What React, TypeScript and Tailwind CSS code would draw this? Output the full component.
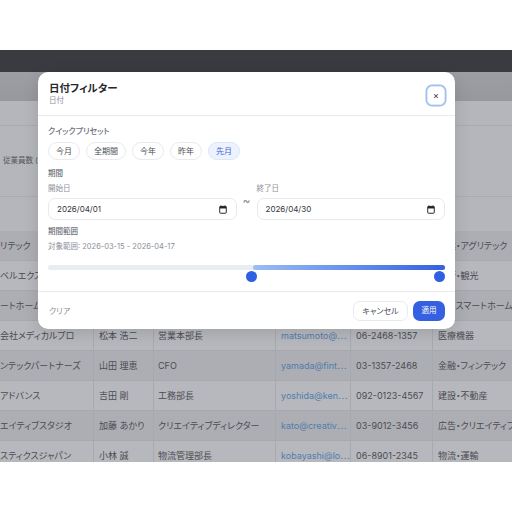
const font = '[font-family:Inter,"Noto_Sans_CJK_JP",sans-serif] [font-feature-settings:"palt"]';

const rows = [
  { company: 'リテック', name: '', title: '', mail: '', tel: '', ind: '農業・アグリテック', tone: 'bg-[#adaeb3]' },
  { company: 'ベルエクス', name: '', title: '', mail: '', tel: '', ind: '旅行・観光', tone: 'bg-[#b7b8bd]' },
  { company: 'ートホーム', name: '', title: '', mail: '', tel: '', ind: 'IoT・スマートホーム', tone: 'bg-[#adaeb3]' },
  { company: '会社メディカルプロ', name: '松本 浩二', title: '営業本部長', mail: 'matsumoto@⋯', tel: '06-2468-1357', ind: '医療機器', tone: 'bg-[#b7b8bd]' },
  { company: 'ンテックパートナーズ', name: '山田 理恵', title: 'CFO', mail: 'yamada@fint⋯', tel: '03-1357-2468', ind: '金融・フィンテック', tone: 'bg-[#adaeb3]' },
  { company: 'アドバンス', name: '吉田 剛', title: '工務部長', mail: 'yoshida@ken⋯', tel: '092-0123-4567', ind: '建設・不動産', tone: 'bg-[#b7b8bd]' },
  { company: 'エイティブスタジオ', name: '加藤 あかり', title: 'クリエイティブディレクター', mail: 'kato@creativ⋯', tel: '03-9012-3456', ind: '広告・クリエイティブ', tone: 'bg-[#adaeb3]' },
  { company: 'スティクスジャパン', name: '小林 誠', title: '物流管理部長', mail: 'kobayashi@lo⋯', tel: '06-8901-2345', ind: '物流・運輸', tone: 'bg-[#b7b8bd]' },
];

function Row({ r }: { r: (typeof rows)[number] }) {
  return (
    <div className={`flex h-[30px] shrink-0 items-center text-[9px] text-[#4b4c52] border-b border-[#a8a9ae] ${r.tone}`}>
      <div className="w-[93px] h-full flex items-center whitespace-nowrap overflow-hidden">{r.company}</div>
      <div className="w-[60px] h-full flex items-center pl-[5px] border-l border-[#a8a9ae] whitespace-nowrap">{r.name}</div>
      <div className="w-[122px] h-full flex items-center pl-[4px] border-l border-[#a8a9ae] whitespace-nowrap overflow-hidden">{r.title}</div>
      <div className="w-[75px] h-full flex items-center pl-[5px] border-l border-[#a8a9ae] text-[#4f7dab] whitespace-nowrap overflow-hidden">{r.mail}</div>
      <div className="w-[82px] h-full flex items-center pl-[5px] border-l border-[#a8a9ae] whitespace-nowrap">{r.tel}</div>
      <div className="flex-1 h-full flex items-center pl-[5px] border-l border-[#a8a9ae] whitespace-nowrap overflow-hidden">{r.ind}</div>
    </div>
  );
}

function CalendarIcon() {
  return (
    <svg width="8" height="9" viewBox="0 0 10 11" className="shrink-0">
      <path d="M2.5 0.5v1.2M7.5 0.5v1.2" stroke="#222" strokeWidth="1.2" />
      <rect x="0.9" y="1.6" width="8.2" height="8.6" rx="1" fill="none" stroke="#222" strokeWidth="1.2" />
      <rect x="0.9" y="1.6" width="8.2" height="2.6" fill="#222" />
    </svg>
  );
}

function DateField({ label, value }: { label: string; value: string }) {
  return (
    <div className="flex-1">
      <div className="text-[7.5px] leading-[12px] text-[#8b8f98] mb-[3px]">{label}</div>
      <div className="h-[22px] rounded-[7px] border border-[#e8eaee] flex items-center justify-between pl-[8px] pr-[9px] text-[8px] text-[#33363d]">
        <span>{value}</span>
        <CalendarIcon />
      </div>
    </div>
  );
}

const presets = ['今月', '全期間', '今年', '昨年', '先月'];

export default function App() {
  return (
    <div className={`relative w-[512px] h-[512px] overflow-hidden bg-white ${font}`}>
      <div className="mt-[50px] h-[412px] flex flex-col overflow-hidden">
        <div className="h-[22px] shrink-0 bg-[#3a3b40]" />
        <div className="h-[29px] shrink-0 bg-gradient-to-b from-[#9c9ea3] to-[#96989d]" />
        <div className="h-[25px] shrink-0 bg-[#b5b6bb] border-b border-[#aaabb0]" />
        <div className="h-[71px] shrink-0 bg-[#b5b6bb] border-b border-[#aaabb0] flex items-center pl-[3px] text-[7.5px] text-[#55565c] whitespace-nowrap">従業員数 (人)</div>
        <div className="h-[34px] shrink-0 bg-[#b5b6bb]" />
        {rows.map((r, i) => (
          <Row key={i} r={r} />
        ))}
      </div>

      <div className="absolute left-[38px] top-[72px] w-[417px] h-[257px] rounded-[10px] bg-white flex flex-col shadow-[0_4px_16px_rgba(0,0,0,0.12)]">
        <div className="h-[44px] shrink-0 border-b border-[#e8eaee] flex items-start justify-between pl-[11px] pr-[10px] pt-[10px]">
          <div>
            <div className="text-[10.5px] leading-[13px] font-bold text-[#25272d]">日付フィルター</div>
            <div className="text-[7.5px] leading-[10px] mt-[1px] text-[#8b8f98]">日付</div>
          </div>
          <button className="w-[18px] h-[19px] mt-[3.5px] rounded-[5px] bg-white border border-[#e5e7eb] ring-[1.5px] ring-[#9cc0f8] flex items-center justify-center text-[9px] leading-none text-[#33363d]">×</button>
        </div>

        <div className="flex-1 pl-[10px] pr-[10px] pt-[9px]">
          <div className="text-[8px] leading-[12px] font-medium text-[#6b6f78]">クイックプリセット</div>
          <div className="flex gap-[6px] mt-[5px]">
            {presets.map((p) => (
              <button
                key={p}
                className={`h-[18px] px-[7px] rounded-full border text-[8px] leading-none ${
                  p === '先月'
                    ? 'bg-[#edf3fe] border-[#dbe6fb] text-[#3a64d8]'
                    : 'bg-white border-[#e8eaee] text-[#4a4d55]'
                }`}
              >
                {p}
              </button>
            ))}
          </div>

          <div className="text-[7.5px] leading-[12px] font-medium text-[#6b6f78] mt-[8px]">期間</div>
          <div className="flex items-start mt-[3px]">
            <DateField label="開始日" value="2026/04/01" />
            <div className="w-[20px] text-center text-[12px] leading-[12px] text-[#8b8f98] mt-[12px]">~</div>
            <DateField label="終了日" value="2026/04/30" />
          </div>

          <div className="text-[7.5px] leading-[12px] font-medium text-[#6b6f78] mt-[6px]">期間範囲</div>
          <div className="text-[7.5px] leading-[12px] text-[#8b8f98] mt-[3px]">対象範囲: 2026-03-15 - 2026-04-17</div>

          <div className="relative h-[5px] mt-[12px] rounded-full bg-[#e8edf4]">
            <div className="absolute left-[205px] right-0 top-0 bottom-0 rounded-full bg-gradient-to-r from-[#9bbcf6] to-[#3560e0]" />
            <div className="absolute left-[198px] top-[6px] w-[11px] h-[11px] rounded-full bg-[#2f5fe3] shadow-[0_0_0_1px_#ffffff]" />
            <div className="absolute right-0 top-[6px] w-[11px] h-[11px] rounded-full bg-[#2f5fe3] shadow-[0_0_0_1px_#ffffff]" />
          </div>
        </div>

        <div className="h-[38px] shrink-0 border-t border-[#e8eaee] flex items-center justify-between pl-[11px] pr-[10px]">
          <span className="text-[8px] text-[#8b8f98]">クリア</span>
          <div className="flex gap-[5px]">
            <button className="h-[20px] w-[55px] rounded-[7px] bg-white border border-[#e8eaee] text-[8px] text-[#4a4d55]">キャンセル</button>
            <button className="h-[20px] w-[32px] rounded-[7px] bg-[#3560e0] text-[7.5px] text-white">適用</button>
          </div>
        </div>
      </div>
    </div>
  );
}
